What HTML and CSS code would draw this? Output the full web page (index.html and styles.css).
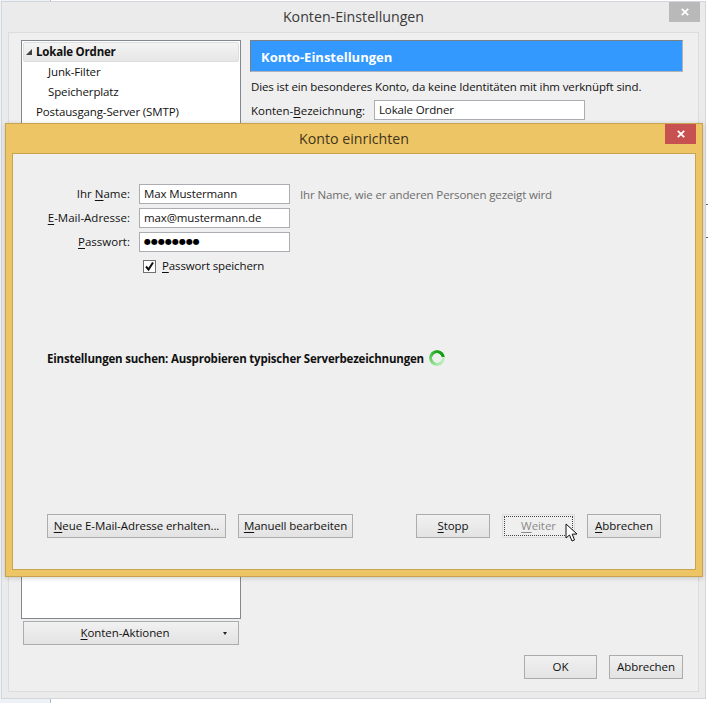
FILE: index.html
```html
<!DOCTYPE html>
<html lang="de">
<head>
<meta charset="utf-8">
<title>Konten-Einstellungen</title>
<link rel="stylesheet" href="styles.css">
</head>
<body>
<div class="desk-left"></div>
<div class="desk-tick tick-a"></div>
<div class="desk-tick tick-b"></div>
<div class="window">
  <div class="titlebar outer-title">Konten-Einstellungen
    <span class="close close-inactive"><svg width="8" height="8" viewBox="0 0 8 8"><path d="M0.8 0.8 L7.2 7.2 M7.2 0.8 L0.8 7.2" stroke="#fff" stroke-width="1.8"/></svg></span>
  </div>
  <div class="panel">
    <div class="left-col">
      <div class="tree">
        <div class="tree-row selected"><span class="twisty"></span>Lokale Ordner</div>
        <div class="tree-row sub">Junk-Filter</div>
        <div class="tree-row sub">Speicherplatz</div>
        <div class="tree-row top">Postausgang-Server (SMTP)</div>
      </div>
      <button class="btn actions"><span class="actions-label"><u>K</u>onten-Aktionen</span><span class="drop"></span></button>
    </div>
    <div class="right-col">
      <div class="banner">Konto-Einstellungen</div>
      <p class="note">Dies ist ein besonderes Konto, da keine Identitäten mit ihm verknüpft sind.</p>
      <div class="name-row"><span class="name-label">Konten-<u>B</u>ezeichnung:</span><span class="field wide">Lokale Ordner</span></div>
      <div class="footer">
        <button class="btn ok">OK</button>
        <button class="btn cancel">Abbrechen</button>
      </div>
    </div>
  </div>
</div>

<div class="dialog">
  <div class="titlebar dialog-title">Konto einrichten
    <span class="close close-active"><svg width="8" height="8" viewBox="0 0 8 8"><path d="M0.8 0.8 L7.2 7.2 M7.2 0.8 L0.8 7.2" stroke="#fff" stroke-width="1.8"/></svg></span>
  </div>
  <div class="dialog-body">
    <div class="form">
      <label class="lbl">Ihr <u>N</u>ame:</label><span class="field">Max Mustermann</span><span class="hint">Ihr Name, wie er anderen Personen gezeigt wird</span>
      <label class="lbl"><u>E</u>-Mail-Adresse:</label><span class="field">max@mustermann.de</span><span></span>
      <label class="lbl"><u>P</u>asswort:</label><span class="field dots">&#9679;&#9679;&#9679;&#9679;&#9679;&#9679;&#9679;&#9679;</span><span></span>
    </div>
    <div class="check-row">
      <span class="check"><svg width="11" height="11" viewBox="0 0 11 11"><path d="M2 5.5 L4.5 8.5 L9 1.5" fill="none" stroke="#111" stroke-width="2"/></svg></span>
      <span class="check-label"><u>P</u>asswort speichern</span>
    </div>
    <div class="status"><b>Einstellungen suchen: Ausprobieren typischer Serverbezeichnungen</b><span class="spinner"></span></div>
    <div class="dialog-buttons">
      <button class="btn new"><u>N</u>eue E-Mail-Adresse erhalten...</button>
      <button class="btn manual"><u>M</u>anuell bearbeiten</button>
      <button class="btn stop"><u>S</u>topp</button>
      <button class="btn next"><span class="next-focus"><u>W</u>eiter</span></button>
      <button class="btn abort"><u>A</u>bbrechen</button>
    </div>
  </div>
  <svg class="cursor" width="14" height="20" viewBox="0 0 14 20"><path d="M1 1 L1 15 L4.5 12 L7 18 L9.5 17 L7.2 11.2 L12 11 Z" fill="#fff" stroke="#111" stroke-width="1"/></svg>
</div>
</body>
</html>
```

FILE: styles.css
```css
* { box-sizing: border-box; }
html, body { margin: 0; padding: 0; }
body {
  width: 708px;
  height: 703px;
  position: relative;
  overflow: hidden;
  background: #fff;
  font-family: "Open Sans", "Noto Sans", sans-serif;
  font-size: 11.5px;
  letter-spacing: -0.13px;
  color: #111;
}
b, .tree-row.selected { letter-spacing: -0.2px; }
u { text-underline-offset: 2px; }
.desk-left {
  position: absolute;
  left: 0;
  top: 0;
  width: 51px;
  height: 703px;
  background: #edf2f8;
  border-right: 1px solid #b0bccb;
}
.desk-tick { position: absolute; left: 706px; width: 2px; height: 1px; background: #666; }
.tick-a { top: 204px; }
.tick-b { top: 237px; }
.window {
  position: absolute;
  left: 1px;
  top: 1px;
  width: 705px;
  height: 698px;
  background: #ebebeb;
  border: 1px solid #d2d6da;
  display: flex;
  flex-direction: column;
  padding: 0 6px 6px;
}
.titlebar {
  position: relative;
  text-align: center;
  font-size: 14.2px;
  letter-spacing: 0;
  color: #3a3a3a;
}
.outer-title { height: 30px; line-height: 30px; flex: none; }
.close {
  position: absolute;
  top: 0;
  width: 31px;
  height: 20px;
  display: flex;
  align-items: center;
  justify-content: center;
}
.close-inactive { right: -1px; background: #b9b9b9; }
.close-active { right: 0; top: 0; background: #c75050; }
.panel {
  flex: 1;
  display: flex;
  gap: 9px;
  background: #efefef;
  border: 1px solid #dcdcdc;
  padding: 7px 15px 12px 12px;
}
.left-col { width: 220px; display: flex; flex-direction: column; gap: 2px; }
.tree {
  height: 579px;
  background: #fff;
  border: 1px solid #828790;
  padding: 1px;
}
.tree-row { height: 20px; line-height: 19px; white-space: nowrap; }
.tree-row.selected {
  height: 20px;
  font-weight: 700;
  background: linear-gradient(#f4f4f4, #e6e6e6);
  border: 1px solid #dedede;
  border-radius: 2px;
  padding-left: 2px;
  line-height: 18px;
  display: flex;
  align-items: center;
}
.twisty {
  width: 0;
  height: 0;
  border-bottom: 6px solid #404040;
  border-left: 6px solid transparent;
  margin-right: 4px;
}
.tree-row.sub { padding-left: 25px; }
.tree-row.top { padding-left: 13px; }
.btn {
  display: block;
  font: inherit;
  letter-spacing: -0.08px;
  color: #111;
  height: 24px;
  padding: 0 0 2px;
  background: linear-gradient(#f1f1f1, #e3e3e3);
  border: 1px solid #acacac;
  white-space: nowrap;
}
.actions {
  margin: 0 2px;
  width: 216px;
  position: relative;
}
.actions-label { margin-right: 12px; }
.drop {
  position: absolute;
  right: 11px;
  top: 10px;
  border-top: 3px solid #222;
  border-left: 2.5px solid transparent;
  border-right: 2.5px solid transparent;
}
.right-col { width: 433px; display: flex; flex-direction: column; }
.banner {
  height: 32px;
  line-height: 33px;
  padding-left: 10px;
  background: #3399ff;
  border: 1px solid #7a7f85;
  border-right-color: #b0b4b8;
  border-bottom-color: #b0b4b8;
  color: #fff;
  font-size: 13px;
  letter-spacing: 0;
  font-weight: 700;
}
.note { margin: 7px 0 0 1px; line-height: 16px; white-space: nowrap; }
.name-row {
  margin: 5px 0 0 1px;
  display: flex;
  align-items: center;
  gap: 9px;
}
.name-label { width: 114px; white-space: nowrap; letter-spacing: 0; }
.field {
  display: block;
  height: 20px;
  line-height: 18px;
  background: #fff;
  border: 1px solid #abadb3;
  padding-left: 4px;
  white-space: nowrap;
}
.wide { width: 211px; }
.footer { margin-top: auto; display: flex; justify-content: flex-end; gap: 12px; }
.ok { width: 73px; }
.cancel { width: 74px; }

.dialog {
  position: absolute;
  left: 5px;
  top: 123px;
  width: 698px;
  height: 454px;
  background: #eec564;
  border: 1px solid #c8a450;
  box-shadow: 0 1px 5px rgba(0, 0, 0, .18);
  display: flex;
  flex-direction: column;
  padding: 0 6px 6px;
}
.dialog-title { height: 29px; line-height: 30px; flex: none; color: #3f3520; }
.dialog-body {
  flex: 1;
  background: #efefef;
  border: 1px solid #c8a450;
  padding: 30px 0 0 0;
  display: flex;
  flex-direction: column;
}
.form {
  display: grid;
  grid-template-columns: 117px 151px auto;
  column-gap: 9px;
  row-gap: 4px;
  align-items: center;
  justify-content: start;
}
.lbl { text-align: right; letter-spacing: 0; padding-bottom: 1px; }
.hint { color: #6d6d6d; margin-left: 1px; }
.dots { font-size: 8px; letter-spacing: 0; font-family: "DejaVu Sans", sans-serif; color: #000; }
.check-row { display: flex; align-items: center; gap: 6px; margin: 5px 0 0 130px; height: 18px; }
.check-label { padding-bottom: 2px; }
.check {
  width: 13px;
  height: 13px;
  background: #fff;
  border: 1px solid #707070;
  display: flex;
  align-items: center;
  justify-content: center;
}
.status {
  display: flex;
  align-items: center;
  gap: 5px;
  margin: 74px 0 0 34px;
  height: 18px;
}
.spinner {
  width: 16px;
  height: 16px;
  border-radius: 50%;
  background: conic-gradient(from 80deg, #c8f0c8, #a6e8a6 100deg, #62cf62 190deg, #1aa51a 280deg, #129a12 360deg);
  -webkit-mask: radial-gradient(circle, transparent 4.5px, #000 5px);
  mask: radial-gradient(circle, transparent 4.5px, #000 5px);
}
.dialog-buttons {
  margin-top: auto;
  margin-bottom: 31px;
  padding-left: 34px;
  display: flex;
  gap: 12px;
}
.new { width: 179px; }
.manual { width: 115px; }
.stop { width: 74px; margin-left: 51px; }
.next {
  width: 73px;
  background: #efefef;
  border-color: #dcdcdc;
  color: #8a8a8a;
  padding: 1px;
}
.next-focus { display: block; height: 20px; line-height: 17px; border: 1px dotted #444; }
.abort { width: 74px; }
.cursor { position: absolute; left: 559px; top: 399px; }
```
